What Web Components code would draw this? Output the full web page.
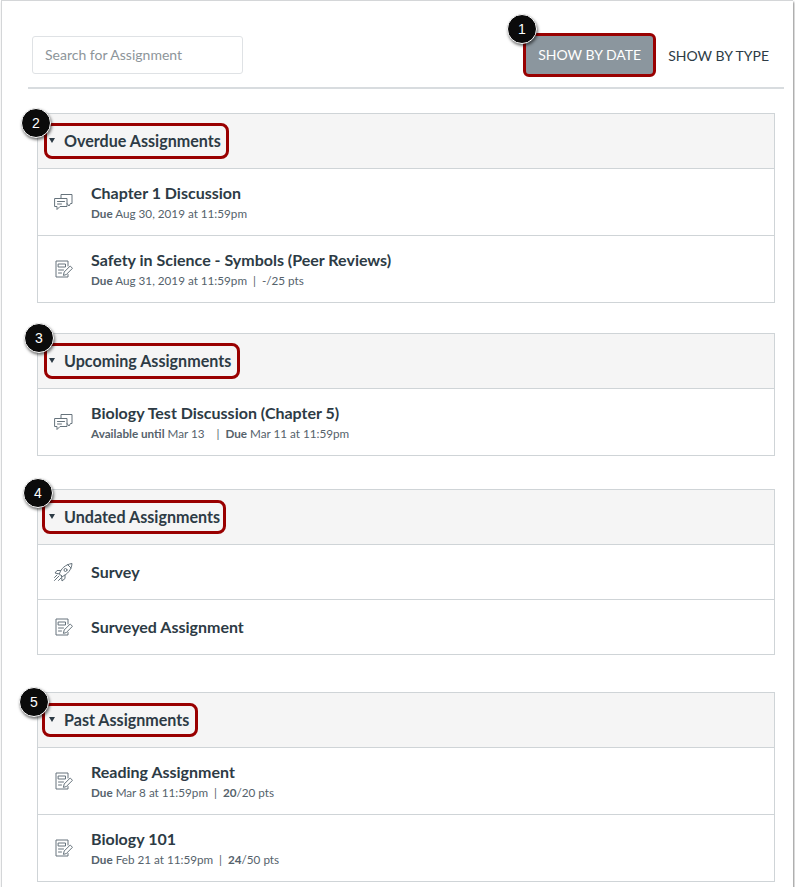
<!DOCTYPE html>
<html lang="en">
<head>
    <meta charset="UTF-8">
    <title>Assignments</title>
    <style>
        html, body { margin: 0; background: #fff; }
        body { font-family: Lato, "Liberation Sans", sans-serif; color: #2d3b45; }
    </style>
</head>
<body>
    <assignments-frame>
        <assignments-toolbar></assignments-toolbar>

        <assignment-group title="Overdue Assignments" ring="185" ringh="36" gap="24" badge="2" bx="-17" by="-6">
            <assignment-row icon="discussion" name="Chapter 1 Discussion"><b>Due</b> Aug 30, 2019 at 11:59pm</assignment-row>
            <assignment-row icon="assignment" name="Safety in Science - Symbols (Peer Reviews)"><b>Due</b> Aug 31, 2019 at 11:59pm &nbsp;|&nbsp; -/25 pts</assignment-row>
        </assignment-group>

        <assignment-group title="Upcoming Assignments" ring="196" ringh="36" gap="30" badge="3" bx="-14" by="-11">
            <assignment-row icon="discussion" name="Biology Test Discussion (Chapter 5)"><b>Available until</b> Mar 13 &nbsp;&nbsp;&nbsp;|&nbsp; <b>Due</b> Mar 11 at 11:59pm</assignment-row>
        </assignment-group>

        <assignment-group title="Undated Assignments" ring="184" ringx="-2" ringh="34" gap="33" badge="4" bx="-15" by="-12">
            <assignment-row icon="rocket" name="Survey" slim></assignment-row>
            <assignment-row icon="assignment" name="Surveyed Assignment" slim></assignment-row>
        </assignment-group>

        <assignment-group title="Past Assignments" ring="156" ringx="-2" ringh="34" gap="37" badge="5" bx="-19" by="-6">
            <assignment-row icon="assignment" name="Reading Assignment"><b>Due</b> Mar 8 at 11:59pm &nbsp;|&nbsp; <b>20</b>/20 pts</assignment-row>
            <assignment-row icon="assignment" name="Biology 101"><b>Due</b> Feb 21 at 11:59pm &nbsp;|&nbsp; <b>24</b>/50 pts</assignment-row>
        </assignment-group>
    </assignments-frame>

    <template id="frame-template">
        <style>
            :host {
                display: block;
                box-sizing: border-box;
                width: 792px;
                height: 887px;
                margin-left: 1px;
                padding: 0 9px 0 26px;
                border: 1px solid #d4d6d8;
                border-bottom: 0;
                border-right: 0;
                box-shadow: 1px 2px 2px #8a8a8a;
            }
        </style>
        <slot></slot>
    </template>

    <template id="toolbar-template">
        <style>
            :host {
                display: flex;
                align-items: center;
                height: 88px;
                box-sizing: border-box;
                padding: 22px 15px 0 4px;
                border-bottom: 2px solid #d8dcdf;
                position: relative;
            }
            .search {
                box-sizing: border-box;
                width: 211px;
                height: 38px;
                padding: 0 12px;
                line-height: 36px;
                font-size: 14px;
                color: #8d959a;
                border: 1px solid #dfe2e5;
                border-radius: 3px;
            }
            .tabs { margin-left: auto; display: flex; align-items: center; gap: 12px; font-size: 14px; }
            .on {
                box-sizing: border-box;
                height: 44px;
                width: 133px;
                line-height: 38px;
                text-align: center;
                color: #fff;
                background: #8b969e;
                border: 3px solid #990000;
                border-radius: 6px;
            }
            .off { color: #2d3b45; }
            .badge { position: absolute; left: 479px; top: 13px; }
        </style>
        <div class="search">Search for Assignment</div>
        <div class="tabs"><span class="on">SHOW BY DATE</span><span class="off">SHOW BY TYPE</span></div>
        <step-badge class="badge">1</step-badge>
    </template>

    <template id="badge-template">
        <style>
            :host {
                display: block;
                box-sizing: border-box;
                width: 30px;
                height: 30px;
                border-radius: 50%;
                background: #0b0b0b;
                color: #fff;
                font: 14px/28px "Liberation Sans", sans-serif;
                text-align: center;
                box-shadow: 1px 2px 3px rgba(0,0,0,.55);
                border: 1px solid #fff;
                z-index: 2;
            }
        </style>
        <slot></slot>
    </template>

    <template id="group-template">
        <style>
            :host {
                display: block;
                position: relative;
                margin-left: 9px;
                width: 738px;
                box-sizing: border-box;
                border: 1px solid #cfd4d7;
            }
            .head {
                display: flex;
                align-items: center;
                height: 55px;
                box-sizing: border-box;
                padding: 0 0 1px 6px;
                background: #f5f5f5;
                border-bottom: 1px solid #cfd4d7;
            }
            .ring {
                display: flex;
                align-items: center;
                box-sizing: border-box;
                height: 35px;
                padding-left: 2px;
                border: 3px solid #990000;
                border-radius: 8px;
            }
            .caret {
                width: 0;
                height: 0;
                margin-right: 9px;
                border: 3.5px solid transparent;
                border-top: 5px solid #2d3b45;
                border-bottom: 0;
            }
            h2 { margin: 0; font-size: 16.1px; font-weight: 700; color: #2d3b45; white-space: nowrap; }
            step-badge { position: absolute; }
            ::slotted(assignment-row:last-child) { border-bottom: 0; height: 66px; }
            ::slotted(assignment-row[slim]:last-child) { height: 54px; }
        </style>
        <div class="head">
            <div class="ring"><span class="caret"></span><h2></h2></div>
        </div>
        <step-badge></step-badge>
        <slot></slot>
    </template>

    <template id="row-template">
        <style>
            :host {
                display: flex;
                align-items: center;
                box-sizing: border-box;
                height: 67px;
                padding-left: 15px;
                border-bottom: 1px solid #cfd4d7;
            }
            :host([slim]) { height: 55px; }
            svg { width: 20px; height: 20px; flex: none; fill: none; stroke: #66737c; stroke-width: 1; stroke-linejoin: round; stroke-linecap: round; }
            .text { margin-left: 18px; }
            .name { font-size: 16px; font-weight: 700; line-height: 20px; color: #2d3b45; }
            .meta { font-size: 11.7px; line-height: 16px; margin-top: 2px; color: #55626b; }
        </style>
        <svg viewBox="0 0 20 20"></svg>
        <div class="text">
            <div class="name"></div>
            <div class="meta"><slot></slot></div>
        </div>
    </template>

    <script>
        // icons drawn by hand, same 20 box for all
        const ICONS = {
            discussion: '<path d="M8 6V2.500h11v9h-1.500L16 14l-2-2.500"/><path d="M2 6.500h12v8H7l-3 3v-3H2z"/><path d="M4.500 9.500h7M4.500 12h4"/>',
            assignment: '<path d="M15 7V2H3v16h12v-2.500"/><path d="M5.500 5h7v3h-7zM5.500 11h5M5.500 14h3"/><path d="M10.500 16l.7-3 6-6 2.300 2.300-6 6z"/>',
            rocket: '<path d="M6.500 11.500C8 6.500 12.500 2.500 19 1.500 18.500 8 14.500 12 9.500 14.500z"/><path d="M14.500 2.500l3.500 3.500"/><circle cx="12.500" cy="8" r="1.500"/><path d="M7.500 8.500H4L2 11l4.700 1M12 13v3.500L9 19l-.5-5.500M6 14l-4.500 4.500M8 16l-2.500 2.500M4 13l-2.500 2.500"/>'
        };

        class AssignmentsFrame extends HTMLElement {
            constructor() {
                super();
                this.attachShadow({ mode: 'open' });
                this.shadowRoot.appendChild(document.getElementById('frame-template').content.cloneNode(true));
            }
        }

        class AssignmentsToolbar extends HTMLElement {
            constructor() {
                super();
                this.attachShadow({ mode: 'open' });
                this.shadowRoot.appendChild(document.getElementById('toolbar-template').content.cloneNode(true));
            }
        }

        class StepBadge extends HTMLElement {
            constructor() {
                super();
                this.attachShadow({ mode: 'open' });
                this.shadowRoot.appendChild(document.getElementById('badge-template').content.cloneNode(true));
            }
        }

        class AssignmentGroup extends HTMLElement {
            constructor() {
                super();
                this.attachShadow({ mode: 'open' });
                this.shadowRoot.appendChild(document.getElementById('group-template').content.cloneNode(true));
            }

            connectedCallback() {
                const root = this.shadowRoot;
                root.querySelector('h2').textContent = this.getAttribute('title');
                const ring = root.querySelector('.ring');
                ring.style.width = this.getAttribute('ring') + 'px';
                // some rings start further left, the label stays where it is
                const shift = Number(this.getAttribute('ringx') || 0);
                ring.style.marginLeft = shift + 'px';
                ring.style.paddingLeft = (2 - shift) + 'px';
                if (this.hasAttribute('ringh')) ring.style.height = this.getAttribute('ringh') + 'px';
                this.style.marginTop = this.getAttribute('gap') + 'px';
                const badge = root.querySelector('step-badge');
                badge.textContent = this.getAttribute('badge');
                badge.style.left = this.getAttribute('bx') + 'px';
                badge.style.top = this.getAttribute('by') + 'px';
            }
        }

        class AssignmentRow extends HTMLElement {
            constructor() {
                super();
                this.attachShadow({ mode: 'open' });
                this.shadowRoot.appendChild(document.getElementById('row-template').content.cloneNode(true));
            }

            connectedCallback() {
                const root = this.shadowRoot;
                root.querySelector('svg').innerHTML = ICONS[this.getAttribute('icon')];
                root.querySelector('.name').textContent = this.getAttribute('name');
                if (this.hasAttribute('slim')) root.querySelector('.meta').style.display = 'none';
            }
        }

        customElements.define('assignments-frame', AssignmentsFrame);
        customElements.define('assignments-toolbar', AssignmentsToolbar);
        customElements.define('step-badge', StepBadge);
        customElements.define('assignment-group', AssignmentGroup);
        customElements.define('assignment-row', AssignmentRow);
    </script>
</body>
</html>
